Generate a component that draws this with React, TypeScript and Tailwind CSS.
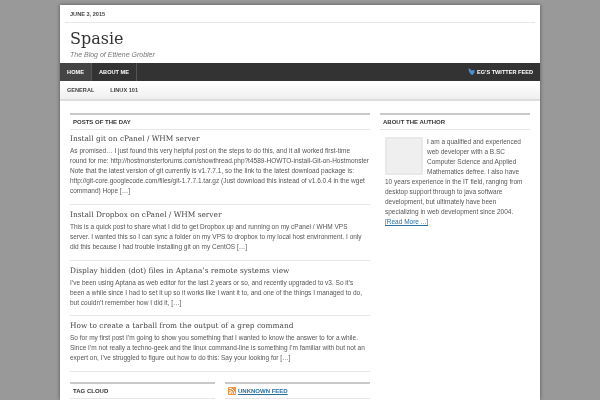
import React, { type FC, type ReactNode } from "react";

const posts = [
	{
		title: "Install git on cPanel / WHM server",
		lines: [
			"As promised… I just found this very helpful post on the steps to do this, and it all worked first-time",
			"round for me: http://hostmonsterforums.com/showthread.php?t4589-HOWTO-install-Git-on-Hostmonster",
			"Note that the latest version of git currently is v1.7.7.1, so the link to the latest download package is:",
			"http://git-core.googlecode.com/files/git-1.7.7.1.tar.gz (Just download this instead of v1.6.0.4 in the wget",
			"command) Hope […]",
		],
		className: "pt-[3px] pb-[8px]",
	},
	{
		title: "Install Dropbox on cPanel / WHM server",
		lines: [
			"This is a quick post to share what I did to get Dropbox up and running on my cPanel / WHM VPS",
			"server. I wanted this so I can sync a folder on my VPS to dropbox to my local host environment. I only",
			"did this because I had trouble installing git on my CentOS […]",
		],
		className: "pt-[4px] pb-[8px]",
	},
	{
		title: "Display hidden (dot) files in Aptana’s remote systems view",
		lines: [
			"I’ve been using Aptana as web editor for the last 2 years or so, and recently upgraded to v3. So it’s",
			"been a while since I had to set it up so it works like I want it to, and one of the things I managed to do,",
			"but couldn’t remember how I did it, […]",
		],
		className: "pt-[4px] pb-[7px]",
	},
	{
		title: "How to create a tarball from the output of a grep command",
		lines: [
			"So for my first post I’m going to show you something that I wanted to know the answer to for a while.",
			"Since I’m not really a techno-geek and the linux command-line is something I’m familiar with but not an",
			"expert on, I’ve struggled to figure out how to do this: Say your looking for […]",
		],
		className: "pt-[4px] pb-[8px]",
	},
];

const WidgetTitle: FC<{ children: ReactNode; className?: string }> = ({ children, className }) => (
	<div
		className={`h-[17px] border-t-2 border-b border-t-[#c9c9c9] border-b-[#e6e6e6] pl-[3px] flex items-center gap-[1px] text-[6px] font-bold text-[#333] uppercase ${className ?? ""}`}
	>
		{children}
	</div>
);

const Post: FC<{ title: string; lines: string[]; className: string }> = ({ title, lines, className }) => (
	<div className={`border-b border-[#e6e6e6] ${className}`}>
		<h2 className="font-['DejaVu_Serif',serif] text-[7.4px] leading-[12px] text-[#444] mb-[1px]">{title}</h2>
		{lines.map((line) => (
			<p key={line} className="text-[6.5px] leading-[10px] text-[#555] whitespace-nowrap">
				{line}
			</p>
		))}
	</div>
);

export default function App() {
	return (
		<div className="w-[600px] h-[400px] overflow-hidden bg-[#999] pt-[5px] font-['Liberation_Sans',sans-serif] blur-[0.3px]">
			<div className="w-[480px] h-[395px] mx-auto bg-white shadow-[0_0_4px_rgba(0,0,0,0.45)]">
				<div className="mx-[5px] h-[18px] border-b border-[#e6e6e6] pl-[5px] pt-[2px] flex items-center text-[5.6px] font-bold text-[#444]">
					JUNE 3, 2015
				</div>
				<div className="pl-[10px] h-[40px]">
					<div className="font-['DejaVu_Serif',serif] text-[16px] leading-[20px] pt-[6px] text-[#333]">Spasie</div>
					<div className="italic text-[7px] leading-[8px] pt-[2px] text-[#777]">The Blog of Ettiene Grobler</div>
				</div>
				<div className="h-[18px] bg-[#333] flex items-center text-[5.6px] font-bold text-white">
					<div className="h-full w-[32px] shrink-0 bg-[#444] border-r border-[#555] flex items-center justify-center">HOME</div>
					<div className="h-full w-[45px] shrink-0 border-r border-[#555] flex items-center justify-center">ABOUT ME</div>
					<div className="ml-auto mr-[7px] flex items-center gap-[2px]">
						<svg width="7" height="8" viewBox="0 0 7 8">
							<path d="M0.5 0.5 L2.5 1 L3 2.5 L6.5 2 L6.5 4.5 L4.5 7 L2.5 6 L1 3.5 Z" fill="#4a90d0" />
						</svg>
						EG'S TWITTER FEED
					</div>
				</div>
				<div className="mt-[1px] h-[19px] bg-gradient-to-b from-white to-[#efefef] border-b-2 border-[#ddd] flex items-center gap-[16px] pl-[7px] text-[5.6px] font-bold text-[#444]">
					<span>GENERAL</span>
					<span>LINUX 101</span>
				</div>
				<div className="flex gap-[10px] px-[10px] pt-[12px]">
					<div className="w-[300px]">
						<WidgetTitle>Posts of the day</WidgetTitle>
						<div>
							{posts.map((post) => (
								<Post key={post.title} title={post.title} lines={post.lines} className={post.className} />
							))}
						</div>
						<div className="flex gap-[10px] mt-[10px]">
							<WidgetTitle className="w-[145px]">Tag Cloud</WidgetTitle>
							<WidgetTitle className="w-[145px]">
								<svg width="8" height="8" viewBox="0 0 8 8" className="mr-[1px]">
									<rect width="8" height="8" rx="1" fill="#f0923b" />
									<circle cx="2" cy="6" r="1" fill="#fff" />
									<path d="M1 3.5a3.5 3.5 0 0 1 3.5 3.5M1 1.2A5.8 5.8 0 0 1 6.8 7" stroke="#fff" fill="none" />
								</svg>
								<span className="text-[#2b6f9e] underline">Unknown Feed</span>
							</WidgetTitle>
						</div>
					</div>
					<div className="w-[150px]">
						<WidgetTitle>About the author</WidgetTitle>
						<div className="pt-[7px] pl-[5px] pr-[6px] text-[6.5px] leading-[10px] text-[#555]">
							<div className="float-left w-[38px] h-[38px] mr-[4px] bg-[#efefef] border-2 border-[#e8e8e8]" />
							<p>
								I am a qualified and experienced web developer with a B.SC Computer Science and Applied Mathematics defree. I also have 10 years experience in the IT field, ranging from desktop support through to java software development, but ultimately have been specializing in web development since 2004.
							</p>
							<a className="text-[#2b6f9e] underline">[Read More ...]</a>
						</div>
					</div>
				</div>
			</div>
		</div>
	);
}
